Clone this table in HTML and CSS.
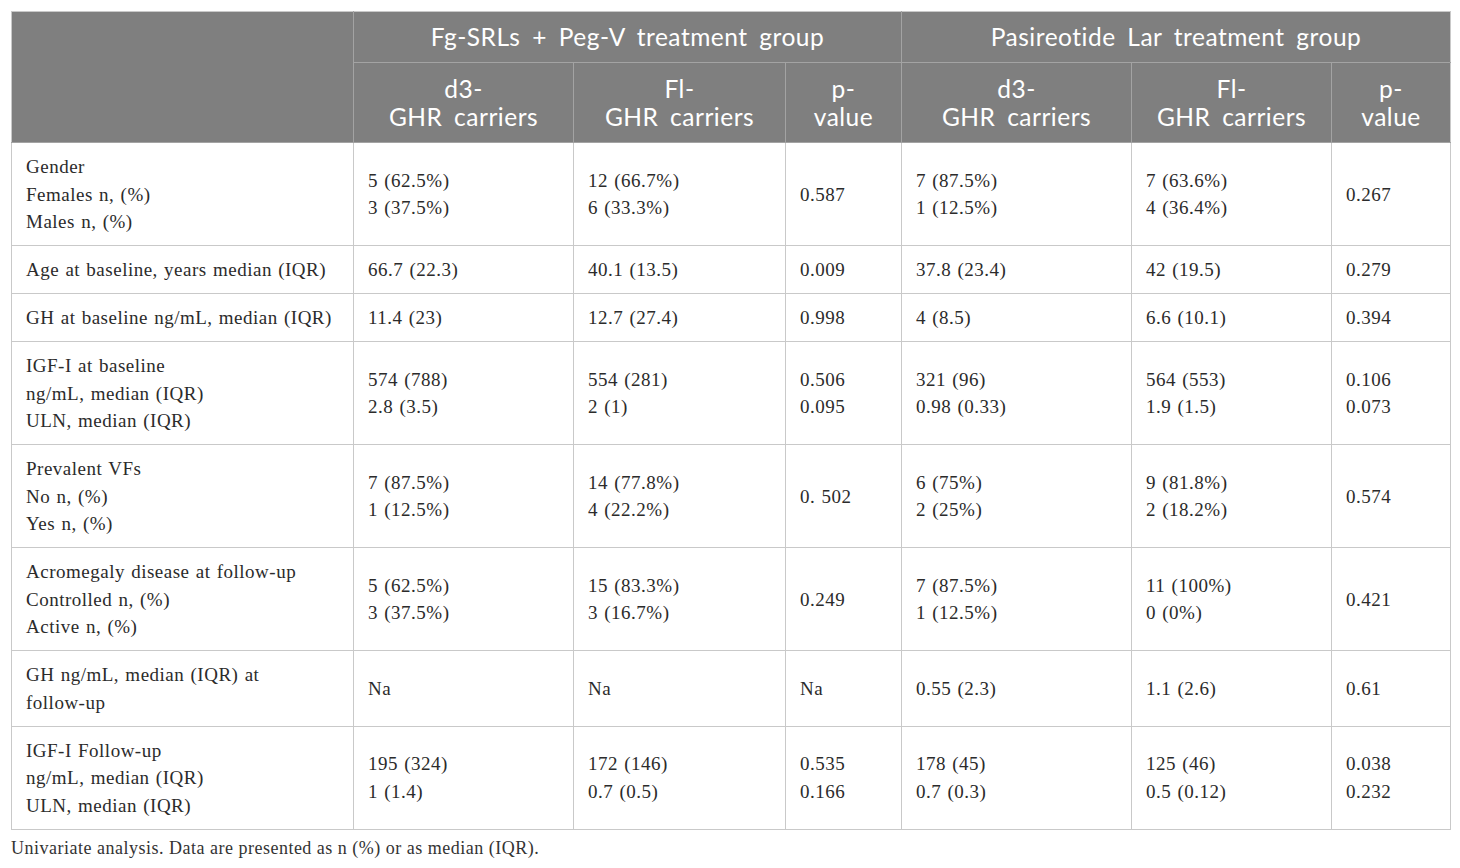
FILE: index.html
```html
<!DOCTYPE html>
<html lang="en">
<head>
    <meta charset="UTF-8">
    <title>GHR carriers table</title>
    <link rel="stylesheet" href="styles.css">
</head>
<body>
    <div class="table-wrap">
        <table class="data-table">
            <colgroup>
                <col class="col-label">
                <col class="col-a">
                <col class="col-b">
                <col class="col-p">
                <col class="col-c">
                <col class="col-d">
                <col class="col-p2">
            </colgroup>
            <thead>
                <tr class="head-top">
                    <th rowspan="2"></th>
                    <th colspan="3">Fg-SRLs + Peg-V treatment group</th>
                    <th colspan="3">Pasireotide Lar treatment group</th>
                </tr>
                <tr class="head-sub">
                    <th>d3-<br>GHR carriers</th>
                    <th>Fl-<br>GHR carriers</th>
                    <th>p-<br>value</th>
                    <th>d3-<br>GHR carriers</th>
                    <th>Fl-<br>GHR carriers</th>
                    <th>p-<br>value</th>
                </tr>
            </thead>
            <tbody>
                <tr>
                    <td>Gender<br>Females n, (%)<br>Males n, (%)</td>
                    <td>5 (62.5%)<br>3 (37.5%)</td>
                    <td>12 (66.7%)<br>6 (33.3%)</td>
                    <td>0.587</td>
                    <td>7 (87.5%)<br>1 (12.5%)</td>
                    <td>7 (63.6%)<br>4 (36.4%)</td>
                    <td>0.267</td>
                </tr>
                <tr>
                    <td>Age at baseline, years median (IQR)</td>
                    <td>66.7 (22.3)</td>
                    <td>40.1 (13.5)</td>
                    <td>0.009</td>
                    <td>37.8 (23.4)</td>
                    <td>42 (19.5)</td>
                    <td>0.279</td>
                </tr>
                <tr>
                    <td>GH at baseline ng/mL, median (IQR)</td>
                    <td>11.4 (23)</td>
                    <td>12.7 (27.4)</td>
                    <td>0.998</td>
                    <td>4 (8.5)</td>
                    <td>6.6 (10.1)</td>
                    <td>0.394</td>
                </tr>
                <tr>
                    <td>IGF-I at baseline<br>ng/mL, median (IQR)<br>ULN, median (IQR)</td>
                    <td>574 (788)<br>2.8 (3.5)</td>
                    <td>554 (281)<br>2 (1)</td>
                    <td>0.506<br>0.095</td>
                    <td>321 (96)<br>0.98 (0.33)</td>
                    <td>564 (553)<br>1.9 (1.5)</td>
                    <td>0.106<br>0.073</td>
                </tr>
                <tr>
                    <td>Prevalent VFs<br>No n, (%)<br>Yes n, (%)</td>
                    <td>7 (87.5%)<br>1 (12.5%)</td>
                    <td>14 (77.8%)<br>4 (22.2%)</td>
                    <td>0. 502</td>
                    <td>6 (75%)<br>2 (25%)</td>
                    <td>9 (81.8%)<br>2 (18.2%)</td>
                    <td>0.574</td>
                </tr>
                <tr>
                    <td>Acromegaly disease at follow-up<br>Controlled n, (%)<br>Active n, (%)</td>
                    <td>5 (62.5%)<br>3 (37.5%)</td>
                    <td>15 (83.3%)<br>3 (16.7%)</td>
                    <td>0.249</td>
                    <td>7 (87.5%)<br>1 (12.5%)</td>
                    <td>11 (100%)<br>0 (0%)</td>
                    <td>0.421</td>
                </tr>
                <tr>
                    <td>GH ng/mL, median (IQR) at<br>follow-up</td>
                    <td>Na</td>
                    <td>Na</td>
                    <td>Na</td>
                    <td>0.55 (2.3)</td>
                    <td>1.1 (2.6)</td>
                    <td>0.61</td>
                </tr>
                <tr>
                    <td>IGF-I Follow-up<br>ng/mL, median (IQR)<br>ULN, median (IQR)</td>
                    <td>195 (324)<br>1 (1.4)</td>
                    <td>172 (146)<br>0.7 (0.5)</td>
                    <td>0.535<br>0.166</td>
                    <td>178 (45)<br>0.7 (0.3)</td>
                    <td>125 (46)<br>0.5 (0.12)</td>
                    <td>0.038<br>0.232</td>
                </tr>
            </tbody>
        </table>
        <p class="table-note">Univariate analysis. Data are presented as n (%) or as median (IQR).</p>
    </div>
</body>
</html>
```

FILE: styles.css
```css
body {
    margin: 0;
    padding: 11px 10px 0 11px;
    background: #fff;
    font-family: "Liberation Serif", "DejaVu Serif", serif;
    color: #2b2b2b;
}
.table-wrap {
    width: 1439px;
}
.data-table {
    width: 1439px;
    table-layout: fixed;
    border-collapse: collapse;
    border: 1px solid #c9c9c9;
}
.col-label { width: 342px; }
.col-a { width: 220px; }
.col-b { width: 212px; }
.col-p { width: 116px; }
.col-c { width: 230px; }
.col-d { width: 200px; }
.col-p2 { width: 119px; }

.data-table th {
    background: #7f7f7f;
    color: #fff;
    font-family: Lato, "Open Sans", sans-serif;
    font-weight: normal;
    font-size: 24.5px;
    letter-spacing: 0.5px;
    word-spacing: 5px;
    line-height: 28px;
    text-align: center;
    border: 1px solid #a3a3a3;
    padding: 0 4px;
}
.data-table thead tr:first-child th {
    border-top-color: #c9c9c9;
}
.data-table thead th:first-child {
    border-left-color: #c9c9c9;
}
.data-table thead th:last-child {
    border-right-color: #c9c9c9;
}
.head-top th {
    height: 50px;
}
.head-sub th {
    height: 79px;
}
.data-table td {
    font-size: 19px;
    letter-spacing: 0.5px;
    word-spacing: 1px;
    line-height: 27.5px;
    padding: 10px 14px 9.5px;
    vertical-align: middle;
    border: 1px solid #c9c9c9;
}
.table-note {
    margin: 6px 0 0 0;
    font-size: 18px;
    letter-spacing: 0.5px;
    line-height: 24px;
    color: #333;
}
```
